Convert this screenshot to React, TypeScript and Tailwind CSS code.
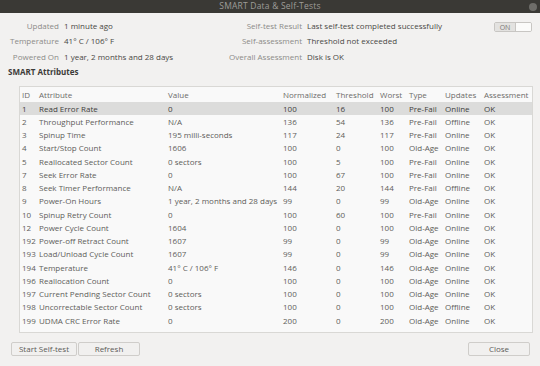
import React from 'react';

type Row = {
  id: string;
  name: string;
  value: string;
  norm: string;
  thresh: string;
  worst: string;
  type: string;
  updates: string;
  assess: string;
};

const rows: Row[] = [
  { id: '1', name: 'Read Error Rate', value: '0', norm: '100', thresh: '16', worst: '100', type: 'Pre-Fail', updates: 'Online', assess: 'OK' },
  { id: '2', name: 'Throughput Performance', value: 'N/A', norm: '136', thresh: '54', worst: '136', type: 'Pre-Fail', updates: 'Offline', assess: 'OK' },
  { id: '3', name: 'Spinup Time', value: '195 milli-seconds', norm: '117', thresh: '24', worst: '117', type: 'Pre-Fail', updates: 'Online', assess: 'OK' },
  { id: '4', name: 'Start/Stop Count', value: '1606', norm: '100', thresh: '0', worst: '100', type: 'Old-Age', updates: 'Online', assess: 'OK' },
  { id: '5', name: 'Reallocated Sector Count', value: '0 sectors', norm: '100', thresh: '5', worst: '100', type: 'Pre-Fail', updates: 'Online', assess: 'OK' },
  { id: '7', name: 'Seek Error Rate', value: '0', norm: '100', thresh: '67', worst: '100', type: 'Pre-Fail', updates: 'Online', assess: 'OK' },
  { id: '8', name: 'Seek Timer Performance', value: 'N/A', norm: '144', thresh: '20', worst: '144', type: 'Pre-Fail', updates: 'Offline', assess: 'OK' },
  { id: '9', name: 'Power-On Hours', value: '1 year, 2 months and 28 days', norm: '99', thresh: '0', worst: '99', type: 'Old-Age', updates: 'Online', assess: 'OK' },
  { id: '10', name: 'Spinup Retry Count', value: '0', norm: '100', thresh: '60', worst: '100', type: 'Pre-Fail', updates: 'Online', assess: 'OK' },
  { id: '12', name: 'Power Cycle Count', value: '1604', norm: '100', thresh: '0', worst: '100', type: 'Old-Age', updates: 'Online', assess: 'OK' },
  { id: '192', name: 'Power-off Retract Count', value: '1607', norm: '99', thresh: '0', worst: '99', type: 'Old-Age', updates: 'Online', assess: 'OK' },
  { id: '193', name: 'Load/Unload Cycle Count', value: '1607', norm: '99', thresh: '0', worst: '99', type: 'Old-Age', updates: 'Online', assess: 'OK' },
  { id: '194', name: 'Temperature', value: '41° C / 106° F', norm: '146', thresh: '0', worst: '146', type: 'Old-Age', updates: 'Online', assess: 'OK' },
  { id: '196', name: 'Reallocation Count', value: '0', norm: '100', thresh: '0', worst: '100', type: 'Old-Age', updates: 'Online', assess: 'OK' },
  { id: '197', name: 'Current Pending Sector Count', value: '0 sectors', norm: '100', thresh: '0', worst: '100', type: 'Old-Age', updates: 'Online', assess: 'OK' },
  { id: '198', name: 'Uncorrectable Sector Count', value: '0 sectors', norm: '100', thresh: '0', worst: '100', type: 'Old-Age', updates: 'Offline', assess: 'OK' },
  { id: '199', name: 'UDMA CRC Error Rate', value: '0', norm: '200', thresh: '0', worst: '200', type: 'Old-Age', updates: 'Online', assess: 'OK' },
];

const headers = ['ID', 'Attribute', 'Value', 'Normalized', 'Threshold', 'Worst', 'Type', 'Updates', 'Assessment'];
const widths = [17, 129, 115, 53, 44, 29, 36, 39, 50];

const InfoLine = ({ label, value, w }: { label: string; value: string; w: string }) => (
  <div className="flex h-[15.5px] items-center">
    <span className={`${w} shrink-0 text-right text-[#8c8b88]`}>{label}</span>
    <span className="ml-[5px] whitespace-nowrap text-[#494845]">{value}</span>
  </div>
);

const Button = ({ label, w }: { label: string; w: string }) => (
  <button className={`${w} h-[14px] rounded-[2px] border border-[#cfcdca] bg-[#f1f0ef] text-[8px] leading-none text-[#5c5b58]`}>
    {label}
  </button>
);

export default function App() {
  return (
    <div
      className="flex h-[366px] w-[540px] flex-col overflow-hidden bg-[#f2f1f0] text-[8px]"
      style={{ fontFamily: '"Open Sans", "Noto Sans", sans-serif' }}
    >
      {/* Title bar */}
      <div className="relative flex h-[13px] shrink-0 items-center justify-center bg-[#3a3935]">
        <span className="text-[8.5px] tracking-[0.2px] text-[#9e9d99]">SMART Data &amp; Self-Tests</span>
        <span className="absolute right-[3px] top-[3px] h-[8px] w-[8px] rounded-full bg-[#6e6d69]" />
      </div>

      {/* Summary */}
      <div className="flex pt-[5px]">
        <div className="w-[226px]">
          <InfoLine label="Updated" value="1 minute ago" w="w-[59px]" />
          <InfoLine label="Temperature" value="41° C / 106° F" w="w-[59px]" />
          <InfoLine label="Powered On" value="1 year, 2 months and 28 days" w="w-[59px]" />
        </div>
        <div className="w-[268px]">
          <InfoLine label="Self-test Result" value="Last self-test completed successfully" w="w-[76px]" />
          <InfoLine label="Self-assessment" value="Threshold not exceeded" w="w-[76px]" />
          <InfoLine label="Overall Assessment" value="Disk is OK" w="w-[76px]" />
        </div>
        <div className="mt-[4px] flex h-[10px] w-[38px] overflow-hidden rounded-[2px] border border-[#c8c6c3]">
          <div className="flex w-[20px] items-center justify-center bg-[#e3e2e0] text-[7px] leading-none text-[#7a7976]">ON</div>
          <div className="flex-1 border-l border-[#c8c6c3] bg-[#fbfbfa]" />
        </div>
      </div>

      <div className="ml-[8px] mt-[1px] h-[14px] font-bold text-[#3c3b38]">SMART Attributes</div>

      {/* Attributes table */}
      <div className="ml-[19px] mt-[6.5px] h-[247px] w-[514px] border border-[#d9d8d5] bg-[#f9f9f9]">
        <table className="table-fixed border-collapse text-[8px] text-[#5e5d5a]">
          <colgroup>
            {widths.map((w, i) => (
              <col key={i} style={{ width: w }} />
            ))}
          </colgroup>
          <thead>
            <tr className="h-[15px]">
              {headers.map(h => (
                <th key={h} className="whitespace-nowrap pl-[2px] text-left font-normal text-[#6d6c69]">{h}</th>
              ))}
            </tr>
          </thead>
          <tbody>
            {rows.map((r, i) => (
              <tr key={r.id} className={i === 0 ? 'h-[13.25px] bg-[#dcdcdb] text-[#3f3e3b]' : 'h-[13.25px]'}>
                <td className="whitespace-nowrap pl-[2px]">{r.id}</td>
                <td className="whitespace-nowrap pl-[2px]">{r.name}</td>
                <td className="whitespace-nowrap pl-[2px]">{r.value}</td>
                <td className="whitespace-nowrap pl-[2px]">{r.norm}</td>
                <td className="whitespace-nowrap pl-[2px]">{r.thresh}</td>
                <td className="whitespace-nowrap pl-[2px]">{r.worst}</td>
                <td className="whitespace-nowrap pl-[2px]">{r.type}</td>
                <td className="whitespace-nowrap pl-[2px]">{r.updates}</td>
                <td className="whitespace-nowrap pl-[2px]">{r.assess}</td>
              </tr>
            ))}
          </tbody>
        </table>
      </div>

      {/* Buttons */}
      <div className="mt-[9px] flex px-[11px]">
        <Button label="Start Self-test" w="w-[66px]" />
        <div className="ml-[1px]">
          <Button label="Refresh" w="w-[62px]" />
        </div>
        <div className="ml-auto mr-[-1px]">
          <Button label="Close" w="w-[62px]" />
        </div>
      </div>
    </div>
  );
}
